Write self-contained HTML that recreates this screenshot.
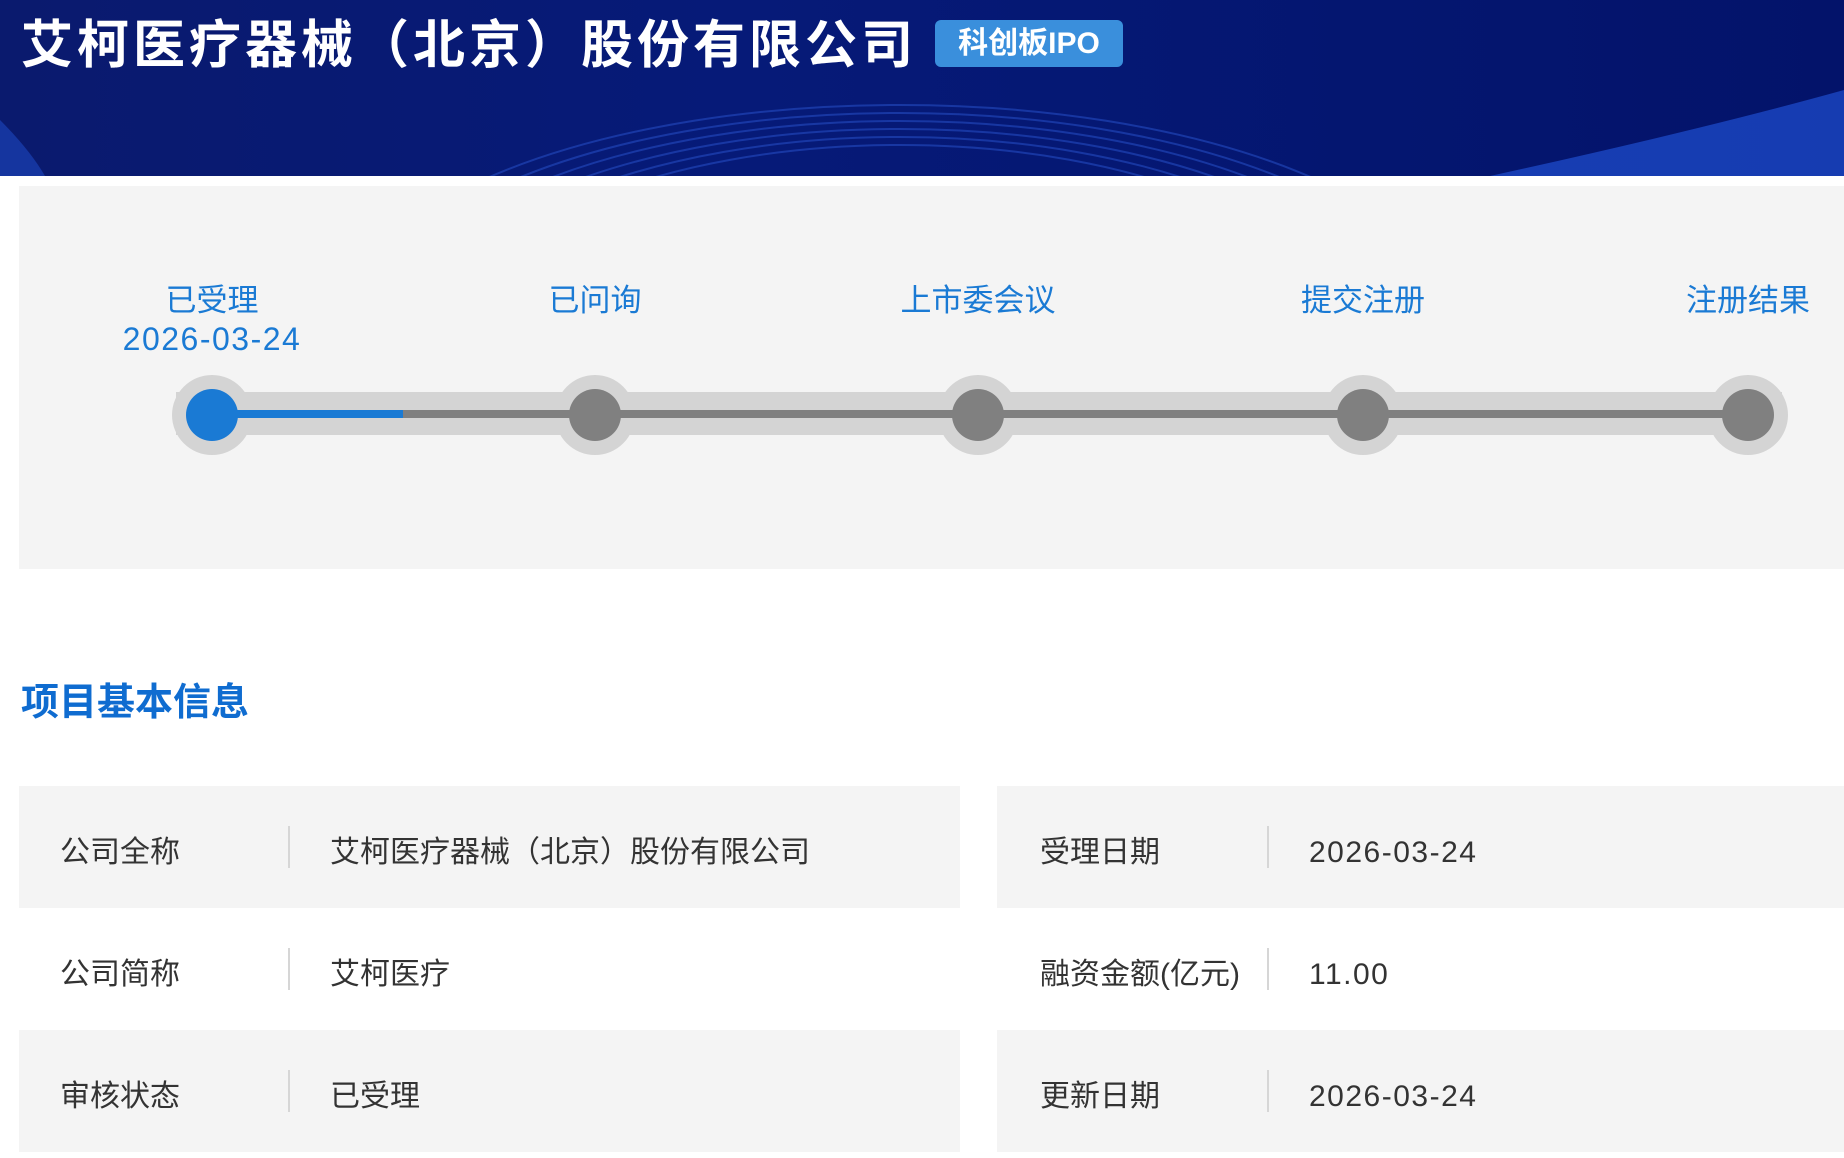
<!DOCTYPE html>
<html><head><meta charset="utf-8"><style>
*{margin:0;padding:0;box-sizing:border-box}
body{width:1844px;height:1158px;background:#fff;font-family:"Liberation Sans","Noto Sans CJK SC",sans-serif;position:relative;overflow:hidden}
.banner{position:absolute;left:0;top:0;width:1844px;height:176px;background:linear-gradient(90deg,#0a1a6e 0%,#061a78 40%,#03136a 100%);overflow:hidden}
.title{position:absolute;left:21px;top:14px;font-size:52px;font-weight:bold;color:#fff;line-height:64px;letter-spacing:4px}
.badge{position:absolute;left:935px;top:20px;width:188px;height:47px;background:#3a8fdc;border-radius:6px;color:#fff;font-size:30px;font-weight:bold;text-align:center;line-height:47px}
.panel{position:absolute;left:19px;top:186px;width:1825px;height:383px;background:#f4f4f4}
.lbl{position:absolute;color:#1a7ad4;font-size:31px;line-height:38px;text-align:center;width:260px}
.lbl .d{letter-spacing:1.5px;font-size:32px}
.track{position:absolute;left:176px;top:392px;width:1606px;height:43px;background:#d4d4d4}
.line{position:absolute;left:212px;top:410px;width:1536px;height:8px;background:#808080}
.blue{position:absolute;left:212px;top:410px;width:191px;height:8px;background:#1a7ad4}
.c{position:absolute;width:80px;height:80px;border-radius:50%;background:#d4d4d4;top:375px}
.i{position:absolute;width:52px;height:52px;border-radius:50%;background:#808080;top:389px}
.sec{position:absolute;left:21px;top:680px;font-size:38px;font-weight:bold;color:#0f6cd0;line-height:46px}
.row{position:absolute;height:122px;font-size:30px;color:#333;line-height:122px}
.row span{position:absolute;top:6px}
.row span.n{letter-spacing:1.5px}
.row b{position:absolute;top:40px;width:2px;height:42px;background:#d6d6d6}
</style></head><body>
<div class="banner">
<svg width="1844" height="176" style="position:absolute;left:0;top:0">
<g fill="none" stroke="#2a55d0" stroke-width="2" opacity="0.5">
<ellipse cx="900" cy="330" rx="560" ry="225"/>
<ellipse cx="900" cy="335" rx="540" ry="222"/>
<ellipse cx="900" cy="340" rx="520" ry="219"/>
<ellipse cx="900" cy="345" rx="500" ry="216"/>
<ellipse cx="900" cy="350" rx="480" ry="213"/>
<ellipse cx="900" cy="355" rx="460" ry="210"/>
</g>
<path d="M1490 176 Q1700 130 1844 90 L1844 176Z" fill="#1f4fd0" opacity="0.7"/>
<path d="M0 120 Q30 150 45 176 L0 176Z" fill="#1f4fd0" opacity="0.5"/>
</svg>
<div class="title">艾柯医疗器械（北京）股份有限公司</div>
<div class="badge">科创板IPO</div>
</div>
<div class="panel"></div>
<div class="lbl" style="left:82px;top:282px">已受理<br><span class="d">2026-03-24</span></div>
<div class="lbl" style="left:465px;top:282px">已问询</div>
<div class="lbl" style="left:848px;top:282px">上市委会议</div>
<div class="lbl" style="left:1233px;top:282px">提交注册</div>
<div class="lbl" style="left:1618px;top:282px">注册结果</div>
<div class="c" style="left:172px"></div>
<div class="c" style="left:555px"></div>
<div class="c" style="left:938px"></div>
<div class="c" style="left:1323px"></div>
<div class="c" style="left:1708px"></div>
<div class="track"></div>
<div class="line"></div>
<div class="blue"></div>
<div class="i" style="left:186px;background:#1a7ad4"></div>
<div class="i" style="left:569px"></div>
<div class="i" style="left:952px"></div>
<div class="i" style="left:1337px"></div>
<div class="i" style="left:1722px"></div>
<div class="sec">项目基本信息</div>
<div class="row" style="left:19px;top:786px;width:941px;background:#f4f4f4"><span style="left:41px">公司全称</span><b style="left:269px"></b><span style="left:311px">艾柯医疗器械（北京）股份有限公司</span></div>
<div class="row" style="left:19px;top:908px;width:941px"><span style="left:41px">公司简称</span><b style="left:269px"></b><span style="left:311px">艾柯医疗</span></div>
<div class="row" style="left:19px;top:1030px;width:941px;background:#f4f4f4"><span style="left:41px">审核状态</span><b style="left:269px"></b><span style="left:311px">已受理</span></div>
<div class="row" style="left:997px;top:786px;width:847px;background:#f4f4f4"><span style="left:43px">受理日期</span><b style="left:270px"></b><span class="n" style="left:312px">2026-03-24</span></div>
<div class="row" style="left:997px;top:908px;width:847px"><span style="left:43px">融资金额(亿元)</span><b style="left:270px"></b><span class="n" style="left:312px">11.00</span></div>
<div class="row" style="left:997px;top:1030px;width:847px;background:#f4f4f4"><span style="left:43px">更新日期</span><b style="left:270px"></b><span class="n" style="left:312px">2026-03-24</span></div>
</body></html>
